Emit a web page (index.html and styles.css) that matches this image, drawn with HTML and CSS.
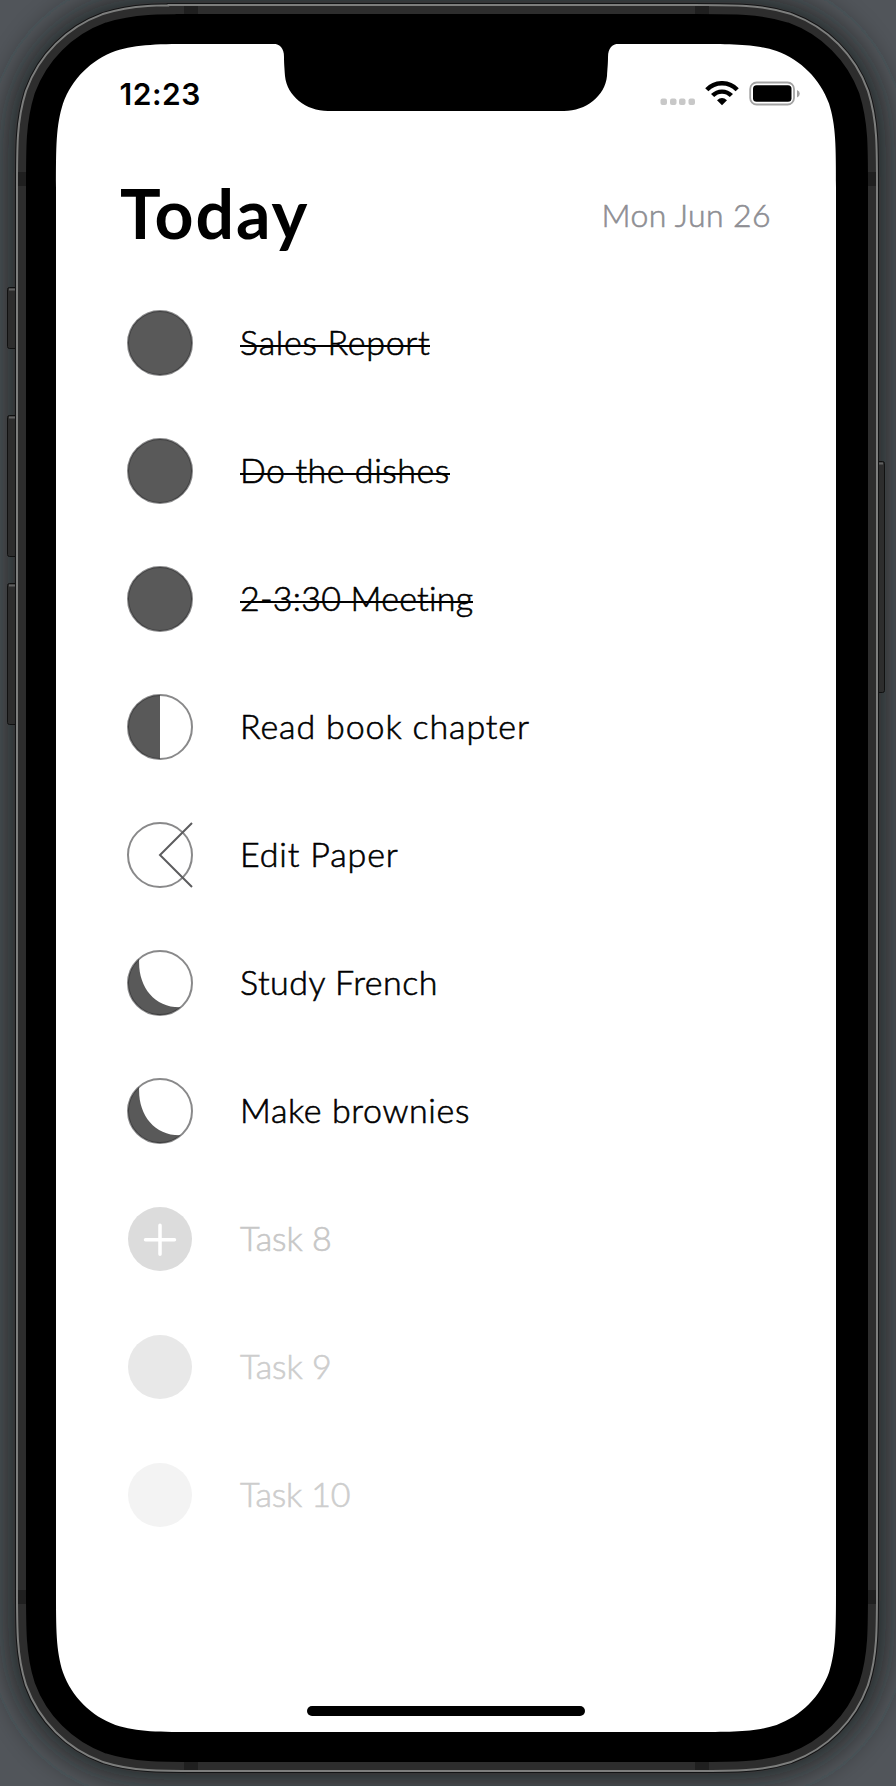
FILE: index.html
```html
<!DOCTYPE html>
<html lang="en">
<head>
<meta charset="utf-8">
<title>Today</title>
<link rel="stylesheet" href="styles.css">
</head>
<body>
<div class="stage">
  <svg class="device" viewBox="0 0 896 1786" aria-hidden="true">
    <defs>
      <filter id="soft" x="-20%" y="-20%" width="140%" height="140%"><feGaussianBlur stdDeviation="17"/></filter>
      <path id="body" d="M199.7 44h494.6c41.4 0 62.1 0 84.3 7c24.3 8.9 43.5 28 52.4 52.4c7 22.2 7 42.9 7 84.3v1400.6c0 41.4 0 62.1 -7 84.3c-8.9 24.3 -28 43.5 -52.4 52.4c-22.2 7 -42.9 7 -84.3 7h-494.6c-41.4 0 -62.1 0 -84.3 -7c-24.3 -8.9 -43.5 -28 -52.4 -52.4c-7 -22.2 -7 -42.9 -7 -84.3v-1400.6c0 -41.4 0 -62.1 7 -84.3c8.9 -24.3 28 -43.5 52.4 -52.4c22.2 -7 42.9 -7 84.3 -7z"/>
    </defs>
    <use href="#body" class="shadow" filter="url(#soft)"/>
    <g class="keys">
      <rect x="7.5" y="287.5" width="14" height="61" rx="2"/>
      <rect x="7.5" y="415.5" width="14" height="141" rx="2"/>
      <rect x="7.5" y="583.5" width="14" height="141" rx="2"/>
      <rect x="870" y="461.5" width="14.5" height="231" rx="2"/>
    </g>
    <path class="key-light" d="M9 289.5h7M9 417.5h7M9 585.5h7M878 463.5h5"/>
    <use href="#body" class="edge"/>
    <use href="#body" class="rim"/>
    <use href="#body" class="band"/>
    <path class="antenna" d="M184 6h14v9h-14zM695 6h14v9h-14zM184 1761h14v9h-14zM695 1761h14v9h-14zM18 172h9v14h-9zM867 172h9v14h-9zM18 1590h9v14h-9zM867 1590h9v14h-9z"/>
    <use href="#body" class="bezel"/>
    <path class="glass" d="M199.7 44h492.6c41.4 0 62.1 0 84.3 7c24.3 8.9 43.5 28 52.4 52.4c7 22.2 7 42.9 7 84.3v1400.6c0 41.4 0 62.1 -7 84.3c-8.9 24.3 -28 43.5 -52.4 52.4c-22.2 7 -42.9 7 -84.3 7h-492.6c-41.4 0 -62.1 0 -84.3 -7c-24.3 -8.9 -43.5 -28 -52.4 -52.4c-7 -22.2 -7 -42.9 -7 -84.3v-1400.6c0 -41.4 0 -62.1 7 -84.3c8.9 -24.3 28 -43.5 52.4 -52.4c22.2 -7 42.9 -7 84.3 -7z"/>
    <path class="notch" d="M272 43.500C280 44 284 48 284 57C284 64 284.500 68 285 76C287 96 306 111 328 111H564C586 111 605 96 607 76C607.500 68 608 64 608 57C608 48 612 44 620 43.500Z"/>
  </svg>

  <main class="screen">
    <div class="status">
      <span class="clock">12:23</span>
      <svg class="indicators" width="140" height="26" viewBox="0 0 140 26" aria-hidden="true">
        <g fill="#c8c8c8"><rect x="0.500" y="17.500" width="6.500" height="6.500" rx="2"/><rect x="10" y="17.500" width="6.500" height="6.500" rx="2"/><rect x="19" y="17.500" width="6.500" height="6.500" rx="2"/><rect x="28.500" y="17.500" width="6.500" height="6.500" rx="2"/></g>
        <path d="M46.800 8.700A21 21 0 0 1 77.200 8.700M52.600 14.600A13 13 0 0 1 71.400 14.600" fill="none" stroke="#000" stroke-width="4.400"/>
        <path d="M62 24.200L57 19.200Q62 14.900 67 19.200Z"/>
        <rect x="90.200" y="1.500" width="43.800" height="22" rx="6.500" fill="none" stroke="#a3a3a3" stroke-width="1.800"/>
        <rect x="93" y="4.300" width="38.500" height="16.400" rx="3.500"/>
        <path d="M137 9Q139.800 10.300 139.800 12.700T137 16.500Z" fill="#a3a3a3"/>
      </svg>
    </div>

    <header class="heading">
      <h1 class="title">Today</h1>
      <span class="date">Mon Jun 26</span>
    </header>

    <ul class="tasks">
      <li class="task"><svg class="moon" viewBox="-34 -34 68 68"><circle class="fill" r="32"/><circle class="ring" r="32"/></svg><span class="name done sales">Sales Report</span></li>
      <li class="task"><svg class="moon" viewBox="-34 -34 68 68"><circle class="fill" r="32"/><circle class="ring" r="32"/></svg><span class="name done dishes">Do the dishes</span></li>
      <li class="task"><svg class="moon" viewBox="-34 -34 68 68"><circle class="fill" r="32"/><circle class="ring" r="32"/></svg><span class="name done meeting">2-3:30 Meeting</span></li>
      <li class="task"><svg class="moon" viewBox="-34 -34 68 68"><path class="fill" d="M0-32A32 32 0 0 0 0 32Z"/><circle class="ring" r="32"/></svg><span class="name book">Read book chapter</span></li>
      <li class="task"><svg class="moon" viewBox="-34 -34 68 68"><circle class="ring" r="32"/><path class="hand" d="M32-32L0 0L32 32"/></svg><span class="name paper">Edit Paper</span></li>
      <li class="task"><svg class="moon" viewBox="-34 -34 68 68"><path class="fill" d="M-20.800-24.300C-22.500 3 -6 25 20.800 24.300A32 32 0 0 1 -24.300 20.800A32 32 0 0 1 -20.800-24.300Z"/><circle class="ring" r="32"/></svg><span class="name french">Study French</span></li>
      <li class="task"><svg class="moon" viewBox="-34 -34 68 68"><path class="fill" d="M-20.800-24.300C-22.500 3 -6 25 20.800 24.300A32 32 0 0 1 -24.300 20.800A32 32 0 0 1 -20.800-24.300Z"/><circle class="ring" r="32"/></svg><span class="name brownies">Make brownies</span></li>
      <li class="task"><svg class="moon" viewBox="-34 -34 68 68"><circle r="32" fill="#dcdcdc"/><path class="plus" d="M-14.500 .7H14.500M0-13.800V15.200"/></svg><span class="name empty eight">Task 8</span></li>
      <li class="task"><svg class="moon" viewBox="-34 -34 68 68"><circle r="32" fill="#e8e8e8"/></svg><span class="name empty">Task 9</span></li>
      <li class="task"><svg class="moon" viewBox="-34 -34 68 68"><circle r="32" fill="#f3f3f3"/></svg><span class="name empty ten">Task 10</span></li>
    </ul>

    <div class="home"></div>
  </main>
</div>
</body>
</html>
```
FILE: styles.css
```css
* { box-sizing: border-box; }
body { margin: 0; }

.stage {
  position: relative;
  width: 896px;
  height: 1786px;
  padding: 44px 60px 54px 56px;
  overflow: hidden;
  background: #51555a;
}

/* phone hardware, behind the screen content */
.device { position: absolute; left: 0; top: 0; width: 896px; height: 1786px; }
.shadow { fill: #202528; stroke: #202528; stroke-width: 96px; }
.edge { fill: none; stroke: #131415; stroke-width: 82px; }
.rim { fill: none; stroke: #7d7e7d; stroke-width: 80px; }
.band { fill: none; stroke: #2d2d2d; stroke-width: 76px; }
.bezel { fill: #000; stroke: #000; stroke-width: 60px; }
.antenna { fill: #1f1f1f; }
.glass { fill: #fff; }
.notch { fill: #000; }
.keys rect { fill: #2d2d2d; stroke: #111; stroke-width: 1px; }
.key-light { stroke: #606060; stroke-width: 2px; }

.screen {
  position: relative;
  display: flex;
  flex-direction: column;
  width: 780px;
  height: 1688px;
  color: #000;
  font-family: Lato, "Noto Sans", sans-serif;
  font-variant-ligatures: none;
}

.status {
  display: flex;
  justify-content: space-between;
  align-items: center;
  height: 100px;
  padding: 0 36px 0 63.5px;
}
.clock { font: 600 30px/36px Inter, sans-serif; letter-spacing: .5px; }

.heading {
  display: flex;
  justify-content: space-between;
  align-items: flex-start;
  height: 128px;
  padding: 29px 65px 0 64px;
}
.title { margin: 0; font-size: 68px; font-weight: 700; line-height: 80px; letter-spacing: 1.9px; }
.date {
  margin-top: 22px;
  color: #8e8e93;
  font-size: 32px;
  font-weight: 300;
  line-height: 40px;
  letter-spacing: .4px;
  -webkit-text-stroke: .6px #8e8e93;
}

.tasks { display: flex; flex-direction: column; margin: 0; padding: 7.33px 0 0 70px; list-style: none; }
.task { display: flex; align-items: center; gap: 46px; height: 128px; }
.moon { width: 68px; height: 68px; flex: none; }
.fill { fill: #595959; }
.ring { fill: none; stroke: rgba(40, 40, 42, .55); stroke-width: 2px; }
.hand { fill: none; stroke: #5c5c5e; stroke-width: 2px; }
.plus { stroke: #fff; stroke-width: 3.5px; stroke-linecap: round; }

.name {
  position: relative;
  margin-top: -3px;
  font-size: 34px;
  font-weight: 300;
  line-height: 44px;
  white-space: nowrap;
  -webkit-text-stroke: .6px currentColor;
}
.done::after { content: ""; position: absolute; left: 0; right: 0; top: 25px; height: 2px; background: #000; }
.sales { letter-spacing: .7px; }
.dishes { letter-spacing: .54px; }
.meeting { letter-spacing: .25px; }
.book { letter-spacing: .88px; }
.paper { letter-spacing: .85px; }
.french { letter-spacing: .52px; }
.brownies { letter-spacing: .63px; }
.empty { color: #cdcdcd; }
.eight { color: #c7c7c7; }
.ten { letter-spacing: -.15px; }

.home { width: 278px; height: 10px; margin: auto auto 16px 251px; border-radius: 5px; background: #000; }
```
